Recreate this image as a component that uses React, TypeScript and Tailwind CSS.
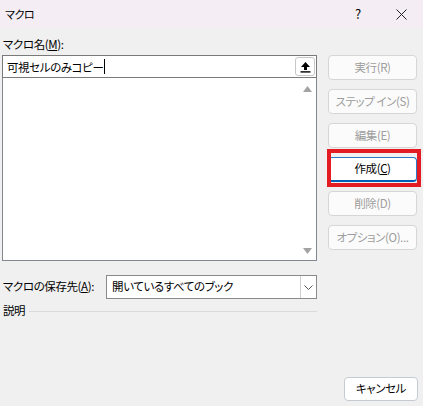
import React from "react";

const font = "[font-family:'Noto_Sans_CJK_JP','Noto_Sans',sans-serif] [font-feature-settings:'palt'] tracking-[-0.4px]";

const SideButton = ({
  label,
  enabled,
  focused,
}: {
  label: React.ReactNode;
  enabled?: boolean;
  focused?: boolean;
}) => {
  return (
    <div className="relative">
      <div
        className={
          focused
            ? "h-[25px] flex items-center justify-center rounded-[4px] bg-white border border-[#2a78c8] border-b-2 border-b-[#005fb8] text-[11.5px] text-black"
            : enabled
            ? "h-[25px] flex items-center justify-center rounded-[4px] bg-white border border-[#d0d0d0] text-[11.5px] text-black"
            : "h-[25px] flex items-center justify-center rounded-[4px] bg-[#fbfbfb] border border-[#d6d6d6] text-[11.5px] text-[#9d9d9d]"
        }
      >
        {label}
      </div>
      {focused ? (
        <div className="absolute top-[-8px] bottom-[-5px] left-[-1px] right-[-4px] border-4 border-[#e41b23]" />
      ) : null}
    </div>
  );
};

export default function App() {
  return (
    <div className={`w-[423px] h-[406px] bg-[#f0f0f0] flex flex-col text-black ${font}`}>
      {/* title bar */}
      <div className="h-[28px] bg-[#f4eef4] flex items-center justify-between pl-[5px]">
        <span className="text-[11px]">マクロ</span>
        <div className="flex items-center h-full">
          <span className="text-[13px] w-[20px] text-center mr-[28px]">?</span>
          <svg width="11" height="11" viewBox="0 0 11 11" className="mr-[16px]">
            <path d="M0.5 0.5 L10.5 10.5 M10.5 0.5 L0.5 10.5" stroke="#222" strokeWidth="1" />
          </svg>
        </div>
      </div>

      <div className="flex-1 flex flex-col pl-[2px]">
        <div className="flex">
          {/* left column */}
          <div className="w-[315px] flex flex-col">
            <div className="mt-[8px] h-[16px] leading-[16px] text-[11.5px] pl-[1px] mb-[3px]">
              マクロ名(<span className="underline">M</span>):
            </div>
            <div className="h-[23px] bg-white border border-[#7a7a7a] flex items-center pl-[4px] pr-[1px]">
              <span className="text-[11.5px] leading-[16px]">可視セルのみコピー</span>
              <span className="w-[1px] h-[15px] bg-black ml-[1px]" />
              <div className="flex-1" />
              <div className="w-[20px] h-[19px] rounded-[3px] border border-[#c8c8c8] bg-white flex items-center justify-center">
                <svg width="11" height="12" viewBox="0 0 11 12">
                  <path d="M5.5 1 L10 6 L7 6 L7 9 L4 9 L4 6 L1 6 Z" fill="#000" />
                  <rect x="0.5" y="10.2" width="10" height="1.4" fill="#000" />
                </svg>
              </div>
            </div>
            <div className="h-[183px] bg-white border border-[#828790] border-t-0 flex justify-end">
              <div className="w-[16px] flex flex-col items-center justify-between pt-[8px] pb-[6px] mr-[1px]">
                <svg width="9" height="6" viewBox="0 0 9 6">
                  <path d="M0 6 L4.5 0 L9 6 Z" fill="#a3a3a3" />
                </svg>
                <svg width="9" height="6" viewBox="0 0 9 6">
                  <path d="M0 0 L9 0 L4.5 6 Z" fill="#a3a3a3" />
                </svg>
              </div>
            </div>
          </div>

          {/* right column */}
          <div className="w-[89px] ml-[11px] pt-[27px] flex flex-col gap-[9px]">
            <SideButton label="実行(R)" />
            <SideButton label="ステップ イン(S)" />
            <SideButton label="編集(E)" />
            <SideButton
              label={
                <span>
                  作成(<span className="underline">C</span>)
                </span>
              }
              focused
            />
            <SideButton label="削除(D)" />
            <SideButton label="オプション(O)..." />
          </div>
        </div>

        {/* storage row */}
        <div className="flex items-center mt-[14px] w-[315px]">
          <span className="text-[11.5px] pl-[1px] w-[104px]">
            マクロの保存先(<span className="underline">A</span>):
          </span>
          <div className="flex-1 h-[24px] bg-white border border-[#8a8a8a] flex items-center">
            <span className="flex-1 text-[11.5px] pl-[5px]">開いているすべてのブック</span>
            <div className="w-[16px] h-full border-l border-[#cfcfcf] flex items-center justify-center">
              <svg width="9" height="5" viewBox="0 0 9 5">
                <path d="M0.5 0.5 L4.5 4.5 L8.5 0.5" fill="none" stroke="#555" strokeWidth="1" />
              </svg>
            </div>
          </div>
        </div>

        {/* description */}
        <div className="flex items-center mt-[4px] w-[315px] h-[16px]">
          <span className="text-[11.5px] pl-[1px]">説明</span>
          <div className="flex-1 h-[1px] bg-[#d9d9d9] ml-[4px]" />
        </div>

        <div className="flex-1" />
        <div className="flex justify-end pr-[5px] pb-[5px]">
          <div className="w-[74px] h-[24px] rounded-[4px] bg-white border border-[#c6cbd2] flex items-center justify-center text-[11.5px]">
            キャンセル
          </div>
        </div>
      </div>
    </div>
  );
}
